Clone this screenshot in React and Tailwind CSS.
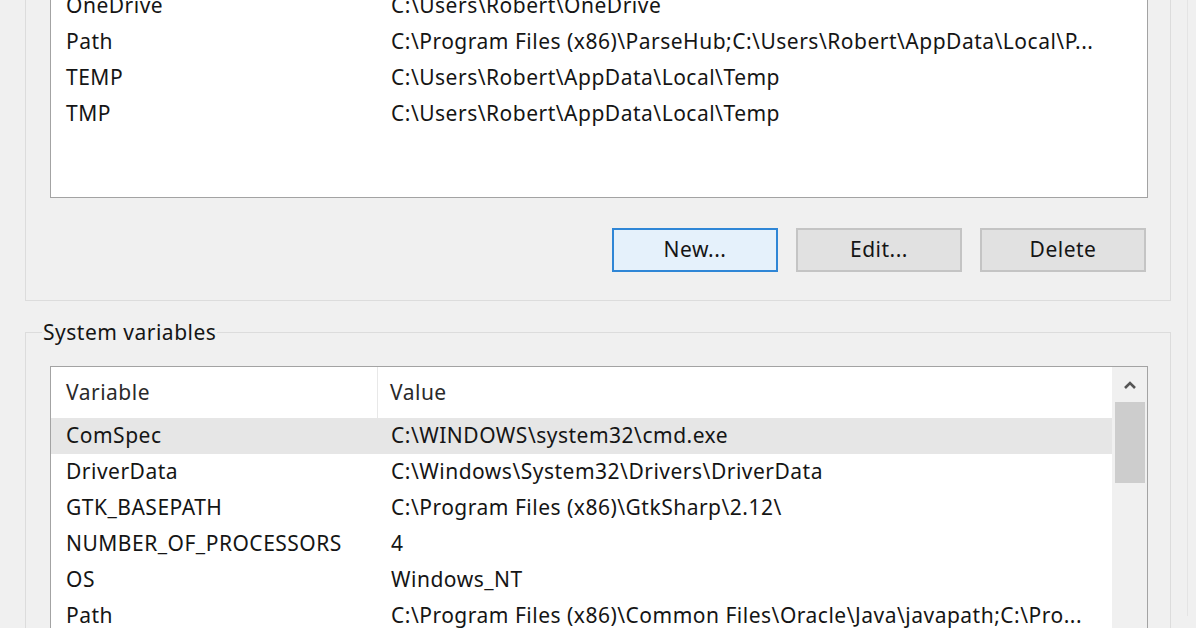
import React from "react";

const userRows = [
  ["OneDrive", "C:\\Users\\Robert\\OneDrive"],
  ["Path", "C:\\Program Files (x86)\\ParseHub;C:\\Users\\Robert\\AppData\\Local\\P..."],
  ["TEMP", "C:\\Users\\Robert\\AppData\\Local\\Temp"],
  ["TMP", "C:\\Users\\Robert\\AppData\\Local\\Temp"],
];

const sysRows = [
  ["ComSpec", "C:\\WINDOWS\\system32\\cmd.exe"],
  ["DriverData", "C:\\Windows\\System32\\Drivers\\DriverData"],
  ["GTK_BASEPATH", "C:\\Program Files (x86)\\GtkSharp\\2.12\\"],
  ["NUMBER_OF_PROCESSORS", "4"],
  ["OS", "Windows_NT"],
  ["Path", "C:\\Program Files (x86)\\Common Files\\Oracle\\Java\\javapath;C:\\Pro..."],
];

function Row({ name, value, selected }) {
  return (
    <div
      className={
        "flex h-[36px] items-center whitespace-nowrap " +
        (selected ? "bg-[#e6e6e6]" : "")
      }
    >
      <div className="w-[327px] shrink-0 pl-[15px]">{name}</div>
      <div className="pl-[13px]">{value}</div>
    </div>
  );
}

function Button({ children, primary }) {
  return (
    <div
      className={
        "flex h-[44px] w-[166px] items-center justify-center border-2 " +
        (primary
          ? "border-[#2f86d6] bg-[#e5f1fb]"
          : "border-[#c4c4c4] bg-[#e1e1e1]")
      }
    >
      {children}
    </div>
  );
}

export default function App() {
  return (
    <div
      className="h-[628px] w-[1196px] overflow-hidden bg-[#f0f0f0] text-[21px] tracking-[0.5px] text-[#151515]"
      style={{ fontFamily: '"Noto Sans", "Open Sans", sans-serif' }}
    >
      <div className="h-full w-[1188px] border-r border-[#e4e4e4] pl-[25px]">
        {/* User variables group */}
        <div className="-mt-[12px] w-[1146px] border-x border-b border-[#dcdcdc] pb-[28px]">
          <div className="ml-[24px] h-[210px] w-[1098px] border-x border-b border-[#a3a3a3] bg-white">
            {userRows.map(([n, v]) => (
              <Row key={n} name={n} value={v} />
            ))}
          </div>
          <div className="mt-[30px] flex justify-end gap-[18px] pr-[24px]">
            <Button primary>New...</Button>
            <Button>Edit...</Button>
            <Button>Delete</Button>
          </div>
        </div>

        {/* System variables group */}
        <div className="mt-[31px] h-[400px] w-[1146px] border-x border-t border-[#dcdcdc]">
          <div className="-mt-[14px] ml-[16px] h-[27px] w-fit bg-[#f0f0f0] px-[1px] leading-[27px]">
            System variables
          </div>
          <div className="ml-[24px] mt-[20px] flex h-[400px] w-[1098px] border-x border-t border-[#a3a3a3] bg-white">
            <div className="flex-1">
              <div className="flex h-[51px] items-center text-[#2a2a2a]">
                <div className="flex h-full w-[327px] shrink-0 items-center border-r border-[#e8e8e8] pl-[15px]">
                  Variable
                </div>
                <div className="pl-[12px]">Value</div>
              </div>
              <div>
                {sysRows.map(([n, v], i) => (
                  <Row key={n} name={n} value={v} selected={i === 0} />
                ))}
              </div>
            </div>
            <div className="flex w-[35px] flex-col items-center bg-[#f0f0f0]">
              <div className="flex h-[35px] w-full items-center justify-center">
                <svg width="14" height="10" viewBox="0 0 14 10">
                  <path d="M2 8 L7 3 L12 8" fill="none" stroke="#555" strokeWidth="2.6" />
                </svg>
              </div>
              <div className="h-[81px] w-[30px] bg-[#cdcdcd]" />
            </div>
          </div>
        </div>
      </div>
    </div>
  );
}
